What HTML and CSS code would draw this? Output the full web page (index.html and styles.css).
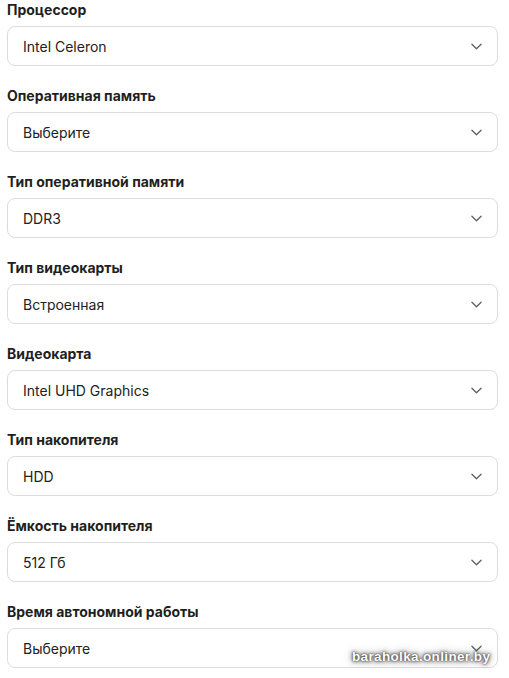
FILE: index.html
```html
<!DOCTYPE html>
<html lang="ru">
<head>
<meta charset="utf-8">
<link rel="stylesheet" href="styles.css">
</head>
<body>
<div class="form">
  <div class="field">
    <div class="label">Процессор</div>
    <div class="select"><span>Intel Celeron</span><svg class="chev" viewBox="0 0 12 7"><path d="M1 1l5 5 5-5"/></svg></div>
  </div>
  <div class="field">
    <div class="label">Оперативная память</div>
    <div class="select"><span>Выберите</span><svg class="chev" viewBox="0 0 12 7"><path d="M1 1l5 5 5-5"/></svg></div>
  </div>
  <div class="field">
    <div class="label">Тип оперативной памяти</div>
    <div class="select"><span>DDR3</span><svg class="chev" viewBox="0 0 12 7"><path d="M1 1l5 5 5-5"/></svg></div>
  </div>
  <div class="field">
    <div class="label">Тип видеокарты</div>
    <div class="select"><span>Встроенная</span><svg class="chev" viewBox="0 0 12 7"><path d="M1 1l5 5 5-5"/></svg></div>
  </div>
  <div class="field">
    <div class="label">Видеокарта</div>
    <div class="select"><span>Intel UHD Graphics</span><svg class="chev" viewBox="0 0 12 7"><path d="M1 1l5 5 5-5"/></svg></div>
  </div>
  <div class="field">
    <div class="label">Тип накопителя</div>
    <div class="select"><span>HDD</span><svg class="chev" viewBox="0 0 12 7"><path d="M1 1l5 5 5-5"/></svg></div>
  </div>
  <div class="field">
    <div class="label">Ёмкость накопителя</div>
    <div class="select"><span>512 Гб</span><svg class="chev" viewBox="0 0 12 7"><path d="M1 1l5 5 5-5"/></svg></div>
  </div>
  <div class="field">
    <div class="label">Время автономной работы</div>
    <div class="select"><span>Выберите</span><svg class="chev" viewBox="0 0 12 7"><path d="M1 1l5 5 5-5"/></svg></div>
  </div>
</div>
<div class="watermark">baraholka.onliner.by</div>
</body>
</html>
```

FILE: styles.css
```css
html, body {
  margin: 0;
  padding: 0;
  background: #fff;
}
body {
  font-family: Inter, "Noto Sans", sans-serif;
  color: #1f1f1f;
  width: 509px;
  height: 678px;
  overflow: hidden;
  position: relative;
}
.form {
  display: flex;
  flex-direction: column;
  gap: 20px;
  padding: 0 11px 0 7px;
}
.field {
  display: flex;
  flex-direction: column;
  gap: 6px;
}
.label {
  font-size: 14px;
  font-weight: 700;
  line-height: 20px;
  color: #1f1f1f;
}
.select {
  height: 40px;
  box-sizing: border-box;
  border: 1px solid #dcdcdc;
  border-radius: 8px;
  display: flex;
  align-items: center;
  justify-content: space-between;
  padding: 0 15px 0 15px;
  font-size: 14px;
  color: #222;
}
.chev {
  width: 11px;
  height: 7px;
  fill: none;
  stroke: #5a5f66;
  stroke-width: 1.4;
  stroke-linecap: round;
  stroke-linejoin: round;
}
.watermark {
  position: absolute;
  left: 352px;
  top: 649px;
  font-family: "Liberation Sans", Arial, sans-serif;
  font-weight: 700;
  font-size: 13.5px;
  line-height: 16px;
  color: #fff;
  letter-spacing: 0.35px;
  text-shadow: 0 0 1px rgba(50,50,50,1), 0 0 3px rgba(60,60,60,0.9), 0 0 5px rgba(70,70,70,0.8), 0 0 9px rgba(90,90,90,0.6);
}
```
